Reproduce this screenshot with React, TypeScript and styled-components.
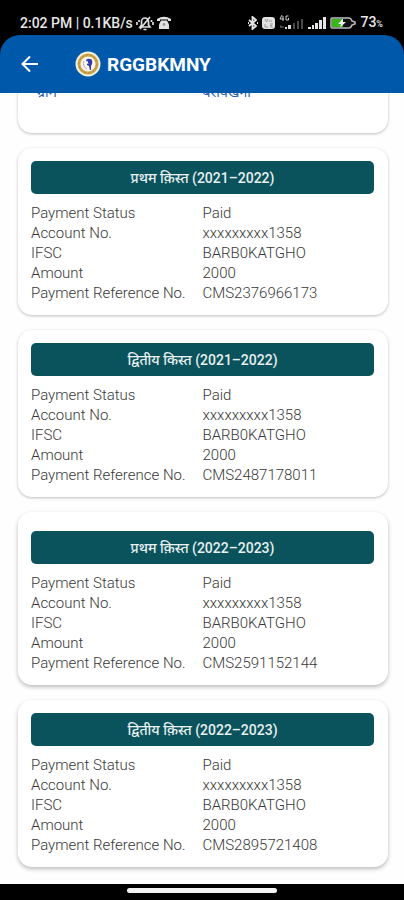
import React from "react";
import styled, { createGlobalStyle } from "styled-components";

const Global = createGlobalStyle`
  * { box-sizing: border-box; }
  body {
    margin: 0;
    background: #fefefe;
    font-family: Roboto, "Noto Sans", "Noto Sans Devanagari", sans-serif;
  }
`;

const Screen = styled.div`
  display: flex;
  flex-direction: column;
  height: 100vh;
  background: #fefefe;
`;

const TopArea = styled.div`
  background: #000;
`;

const StatusBar = styled.div`
  display: flex;
  align-items: center;
  justify-content: space-between;
  height: 35px;
  padding: 10px 21px 0 20px;
  color: #e6e6e6;
  font-size: 14px;
  font-weight: 500;
  line-height: 20px;
  white-space: nowrap;
`;

const StatusGroup = styled.div<{ $gap: number }>`
  display: flex;
  align-items: center;
  gap: ${(p) => p.$gap}px;
`;

const Percent = styled.span`
  font-size: 9px;
`;

const AppBar = styled.header`
  display: flex;
  align-items: center;
  height: 58px;
  padding: 0 20px;
  border-radius: 20px 20px 0 0;
  background: #0058aa;
  color: #fff;
`;

const BackButton = styled.button`
  display: flex;
  width: 20px;
  margin-right: 35px;
  padding: 0;
  border: 0;
  background: none;
  color: inherit;
`;

const Title = styled.h1`
  margin: 2px 0 0 6px;
  font-size: 19px;
  font-weight: 700;
  line-height: 24px;
`;

const Content = styled.main`
  display: flex;
  flex: 1;
  flex-direction: column;
  justify-content: flex-end;
  gap: 15px;
  min-height: 0;
  overflow: hidden;
  padding: 0 16px 17px 18px;
`;

const Card = styled.section<{ $spaced?: boolean; $raised?: boolean }>`
  flex: none;
  padding: ${(p) => (p.$spaced ? 19 : 13)}px 14px 12px 13px;
  border-radius: 14px;
  background: #fff;
  box-shadow: ${(p) =>
    p.$raised
      ? "0 2px 4px rgba(0, 0, 0, 0.27)"
      : "0 1px 3px rgba(0, 0, 0, 0.26)"};
`;

const VillageCard = styled(Card)`
  padding-bottom: 31px;
  color: #2460b0;
`;

const CardTitle = styled.h2`
  margin: 0 0 9px;
  padding-top: 1px;
  border-radius: 5px;
  background: #0b535c;
  color: #e8f0f1;
  font-size: 14px;
  font-weight: 500;
  line-height: 32px;
  text-align: center;
`;

const Details = styled.dl`
  display: grid;
  grid-template-columns: minmax(0, 1fr) minmax(0, 1fr);
  margin: 0;
  color: #383838;
  font-size: 15px;
  font-weight: 300;
  line-height: 20px;
`;

const VillageDetails = styled(Details)`
  color: inherit;
  font-size: 14px;
  font-weight: 400;
`;

const Term = styled.dt``;

const VillageTerm = styled(Term)`
  padding-left: 6px;
`;

const Value = styled.dd`
  margin: 0;
`;

const NavBar = styled.footer`
  display: flex;
  flex: none;
  justify-content: center;
  height: 16px;
  padding-top: 4px;
  background: #000;
`;

const HomeHandle = styled.div`
  width: 150px;
  height: 5px;
  border-radius: 3px;
  background: #f2f2f2;
`;

const MutedBell = () => (
  <svg width="18" height="16" viewBox="0 0 18 16" fill="none" stroke="#ddd" strokeWidth="1.700">
    <path d="M4 12h10l-1.500-2V6.500a3.500 3.500 0 0 0-7 0V10zM7.500 14.500h3M4 14 14 2M1 7v3M17 7v3M3 5v2M15.500 5v2" />
  </svg>
);

const Telephone = () => (
  <svg width="14" height="14" viewBox="0 0 14 14" fill="#e0e0e0">
    <path d="M0 5V3Q7-1.500 14 3v2h-3V3.500H3V5z" />
    <path d="M4 4.500h6l2 4V13H2V8.500z" />
    <circle cx="7" cy="8.500" r="1.400" fill="#999" />
  </svg>
);

const Bluetooth = () => (
  <svg width="10" height="14" viewBox="0 0 10 14" fill="none" stroke="#e6e6e6" strokeWidth="1.800">
    <path d="m1 4 7 6-3.500 3V1L8 4l-7 6" />
    <path d="M0 7h1M9 7h1" />
  </svg>
);

const VolteBadge = () => (
  <svg width="13" height="12" viewBox="0 0 13 12">
    <rect width="13" height="12" rx="3" fill="#e2e2e2" />
    <path d="m3 2 1.500 3L6 2M7 4h3M3 7v3h3M8 7h3M8 8.500h2M8 10h3" fill="none" stroke="#999" />
  </svg>
);

const WeakSignal = () => (
  <svg width="25" height="15" viewBox="0 0 25 15">
    <path d="M3 0 1 4h4M4 1v5M9.500 1H7v4h2.500V3" fill="none" stroke="#ccc" />
    <path d="M1 12h4M2 10v3" stroke="#666" />
    <path d="M6 14v-2h2v2zM9 14v-4h3v4z" fill="#ddd" />
    <path d="M14 14V8h2v6zM18 14V6h2v8zM22 14V4h2v10z" fill="#4a4a4a" />
  </svg>
);

const FullSignal = () => (
  <svg width="18" height="12" viewBox="0 0 18 12" fill="#e6e6e6">
    <path d="M0 12v-2h3v2zM4 12V8h2v4zM7 12V6h3v6zM11 12V3h3v9zM15 12V0h3v12z" />
  </svg>
);

const Battery = () => (
  <svg width="26" height="12" viewBox="0 0 26 12">
    <path d="M2 1h17q2 0 3 3l3 1v2l-3 1q-1 3-3 3H2q-1 0-1-1V2q0-1 1-1z" fill="#111" stroke="#bbb" strokeWidth="1.500" />
    <path d="M2 2h11v8H2z" fill="#37b51b" />
    <path d="M13 1.500 8 7h3l-1 3.500L16 5h-3z" fill="#eee" />
  </svg>
);

const BackArrow = () => (
  <svg width="20" height="20" viewBox="0 0 20 20" fill="none" stroke="currentColor" strokeWidth="2">
    <path d="M18 10H2.500M10 2.500 2.500 10l7.500 7.500" />
  </svg>
);

const Emblem = () => (
  <svg width="26" height="26" viewBox="0 0 26 26">
    <circle cx="13" cy="13" r="12.500" fill="#f4f0df" />
    <circle cx="13" cy="13" r="9" fill="#f8f5ef" stroke="#cda64b" strokeWidth="3" />
    <circle cx="13" cy="13" r="9" fill="none" stroke="#b08e4a" strokeWidth="1" strokeDasharray="2 2" />
    <path d="M11 9q2-2 4-1 3 0 2 5l-1 2v4h-1l-1-4-2-1v-3z" fill="#3338ad" />
    <path d="m12 10 1 3" fill="none" stroke="#fff" />
    <path d="M9 10q-2 5 3 8" fill="none" stroke="#bba9bd" />
  </svg>
);

type Installment = { title: string; reference: string; spaced?: boolean; raised?: boolean };

const installments: Installment[] = [
  { title: "प्रथम क़िस्त (2021–2022)", reference: "CMS2376966173" },
  { title: "द्वितीय किस्त (2021–2022)", reference: "CMS2487178011" },
  { title: "प्रथम क़िस्त (2022–2023)", reference: "CMS2591152144", spaced: true, raised: true },
  { title: "द्वितीय क़िस्त (2022–2023)", reference: "CMS2895721408", raised: true },
];

const InstallmentCard = ({ title, reference, spaced, raised }: Installment) => (
  <Card $spaced={spaced} $raised={raised}>
    <CardTitle>{title}</CardTitle>
    <Details>
      <Term>Payment Status</Term>
      <Value>Paid</Value>
      <Term>Account No.</Term>
      <Value>xxxxxxxxx1358</Value>
      <Term>IFSC</Term>
      <Value>BARB0KATGHO</Value>
      <Term>Amount</Term>
      <Value>2000</Value>
      <Term>Payment Reference No.</Term>
      <Value>{reference}</Value>
    </Details>
  </Card>
);

export default function App() {
  return (
    <>
      <Global />
      <Screen>
        <TopArea>
          <StatusBar>
            <StatusGroup $gap={3}>
              <span>2:02 PM | 0.1KB/s</span>
              <MutedBell />
              <Telephone />
            </StatusGroup>
            <StatusGroup $gap={4}>
              <Bluetooth />
              <VolteBadge />
              <WeakSignal />
              <FullSignal />
              <Battery />
              <span>
                73<Percent>%</Percent>
              </span>
            </StatusGroup>
          </StatusBar>
          <AppBar>
            <BackButton type="button" aria-label="Back">
              <BackArrow />
            </BackButton>
            <Emblem />
            <Title>RGGBKMNY</Title>
          </AppBar>
        </TopArea>
        <Content>
          <VillageCard>
            <VillageDetails>
              <VillageTerm>ग्राम</VillageTerm>
              <Value>बरायखेना</Value>
            </VillageDetails>
          </VillageCard>
          {installments.map((item) => (
            <InstallmentCard key={item.reference} {...item} />
          ))}
        </Content>
        <NavBar>
          <HomeHandle />
        </NavBar>
      </Screen>
    </>
  );
}
